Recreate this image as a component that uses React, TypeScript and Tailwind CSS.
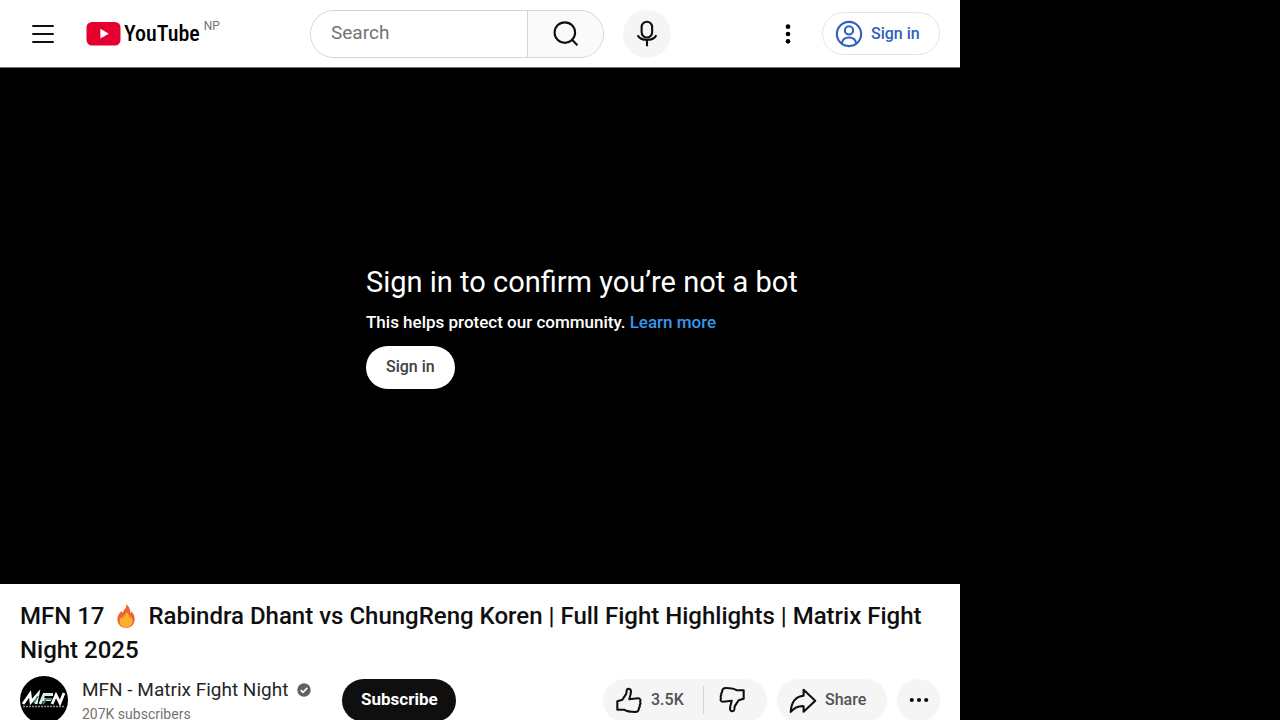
import type { ReactNode } from 'react';

interface IconProps {
  className?: string;
  children: ReactNode;
}

function Icon({ className = 'h-7 w-7', children }: IconProps) {
  return (
    <svg
      className={className}
      viewBox="0 0 24 24"
      fill="none"
      stroke="currentColor"
      strokeWidth="1.8"
      strokeLinejoin="round"
      aria-hidden="true"
    >
      {children}
    </svg>
  );
}

function Logo() {
  return (
    <a href="/" aria-label="YouTube Home" className="flex items-center gap-0.5 text-black">
      <svg className="h-6 w-9" viewBox="0 0 36 24" aria-hidden="true">
        <rect x="0.5" y="0" width="34" height="23.5" rx="5.5" fill="#e6002f" />
        <path d="M14.4 6.8v9.8l8.4-4.9z" fill="#fff" />
      </svg>
      <span className="font-['Roboto_Condensed','Liberation_Sans_Narrow',sans-serif] text-[22px] leading-7 font-medium">
        YouTube
      </span>
    </a>
  );
}

function Header() {
  return (
    <header className="flex h-[68px] items-center border-b border-neutral-500 px-5">
      <div className="flex w-[290px] shrink-0 items-center gap-5">
        <button type="button" aria-label="Guide" className="flex h-12 w-[46px] items-center justify-center">
          <Icon>
            <path d="M2.8 5.2h18.4M2.8 12h18.4M2.8 18.8h18.4" />
          </Icon>
        </button>
        <div className="flex items-start gap-1">
          <Logo />
          <span className="text-xs leading-3 text-neutral-500">NP</span>
        </div>
      </div>

      <form
        className="flex h-12 w-[294px] overflow-hidden rounded-full border border-neutral-300"
        onSubmit={(e) => e.preventDefault()}
      >
        <input
          type="text"
          aria-label="Search"
          placeholder="Search"
          className="min-w-0 flex-1 bg-white pl-5 text-[19px] text-neutral-900 outline-none placeholder:text-neutral-500"
        />
        <button
          type="submit"
          aria-label="Search"
          className="flex w-[76px] items-center justify-center border-l border-neutral-300 bg-neutral-50"
        >
          <Icon>
            <circle cx="11" cy="10.800" r="8.800" />
            <path d="M17.200 17l4.600 4.600" />
          </Icon>
        </button>
      </form>
      <button
        type="button"
        aria-label="Search with your voice"
        className="ml-[19px] flex h-12 w-12 items-center justify-center rounded-full bg-neutral-100"
      >
        <Icon>
          <rect x="7.400" y="1.500" width="9" height="13.500" rx="4.500" />
          <path d="M4 13a8.500 6 0 0 0 16 0M12 17.800v4.600" />
        </Icon>
      </button>

      <div className="ml-auto flex items-center gap-5">
        <button type="button" aria-label="Settings" className="text-black">
          <Icon>
            <g fill="currentColor" stroke="none">
              <circle cx="12" cy="5.700" r="2" />
              <circle cx="12" cy="12" r="2" />
              <circle cx="12" cy="18.300" r="2" />
            </g>
          </Icon>
        </button>
        <a
          href="/signin"
          className="flex h-[43px] w-[118px] items-center gap-2 rounded-full border border-neutral-200 pl-3 text-base font-medium text-[#315fbd]"
        >
          <Icon>
            <circle cx="12" cy="12" r="10.400" />
            <circle cx="12" cy="8.900" r="3.500" />
            <path d="M5.700 20.200c.6-3.400 3.100-5.200 6.300-5.200s5.700 1.800 6.300 5.200" />
          </Icon>
          Sign in
        </a>
      </div>
    </header>
  );
}

function Player() {
  return (
    <section className="flex min-h-[516px] flex-col items-start justify-center bg-black pl-[366px] text-white">
      <h2 className="text-[29px] leading-9">Sign in to confirm you’re not a bot</h2>
      <p className="mt-2.5 text-[17px] leading-6 font-medium">
        This helps protect our community.{' '}
        <a href="/help" className="text-[#3996ed]">
          Learn more
        </a>
      </p>
      <button
        type="button"
        className="mt-3 h-[43px] rounded-full bg-white px-5 text-base font-medium text-neutral-700"
      >
        Sign in
      </button>
    </section>
  );
}

function Flame() {
  return (
    <svg className="mx-1 inline-block h-6 w-6 align-[-4px]" viewBox="0 0 24 24" role="img" aria-label="fire">
      <path
        d="M12.400 0c.2 3-1.200 4.600-2.700 6.500-.6.800-.9 1.500-1.100 2.300-.6-.4-.9-1-1.100-1.700C5.100 9.400 3.400 12 3.400 15.200c0 5 3.600 8.600 8.700 8.600s8.600-3.600 8.600-8.600c0-3.200-1.400-5.900-3.200-8-.1.900-.4 1.600-.9 2.100C16.500 5.800 15 2.300 12.400 0z"
        fill="#ee6530"
      />
      <path
        d="M12.200 8.300c-.2 2-1.400 3-2.500 4.300-.4.500-.7 1-.8 1.500-.4-.3-.7-.7-.9-1.200-1.500 1.200-2.400 2.600-2.400 4.400 0 3.500 2.800 6 6.500 6s6.500-2.500 6.500-6c0-2-.8-3.400-1.900-4.800-.1.700-.4 1.200-.9 1.500-.2-2.300-1.500-4.400-3.600-5.700z"
        fill="#fbb02d"
      />
    </svg>
  );
}

function Avatar() {
  return (
    <svg className="h-12 w-12 shrink-0" viewBox="0 0 48 48" role="img" aria-label="MFN">
      <circle cx="24" cy="24" r="24" fill="#000" />
      <g fill="none" stroke="#fff" strokeWidth="2.800">
        <path d="M3 28l7-10 1 8 7-8-2 10" />
        <path d="M20 28l4-9.500h9M23 23.500h8" stroke="#dfe9e6" />
        <path d="M32 28l4-9 4 8 4-10" />
      </g>
      <path d="M14 27l4-7M23 28l3-5h6" stroke="#3d9580" strokeWidth="1.800" fill="none" />
      <path d="M3 30.500h42" stroke="#929292" strokeWidth="1.400" strokeDasharray="2 1" />
    </svg>
  );
}

function ThumbIcon({ className }: { className: string }) {
  return (
    <Icon className={className}>
      <path d="M2 13.100l4.300-1.300 3.300-5 .5-3.300c.3-1.700 3.500-1.300 3.600.6.100 2.500-.8 5-1.500 7.200l7.500-.8c1.900-.1 2.600 1.700 1.800 3 .6 1 .4 2-.3 2.700.3 1 .1 1.900-.6 2.500-.1 2.400-1 3.600-3.400 3.600-3.600 0-7-.3-9.500-2H2z" />
    </Icon>
  );
}

function Details() {
  return (
    <main className="px-5 pt-[15px]">
      <h1 className="text-2xl leading-[34px] font-medium">
        <span>MFN 17</span> <Flame /> <span>Rabindra Dhant vs ChungReng Koren | Full Fight Highlights | Matrix Fight</span>{' '}
        <span>Night 2025</span>
      </h1>
      <div className="mt-[9px] flex items-center">
        <Avatar />
        <div className="ml-[14px]">
          <a href="/channel" className="flex items-center gap-2 text-[19px] leading-7 text-neutral-800">
            MFN - Matrix Fight Night
            <svg className="h-4 w-4" viewBox="0 0 16 16" aria-label="Verified">
              <circle cx="8" cy="8" r="6.700" fill="#606060" />
              <path d="M4.700 8.200l2.300 2.200 4.300-4.500" fill="none" stroke="#fff" strokeWidth="1.600" />
            </svg>
          </a>
          <p className="text-sm leading-5 text-neutral-500">207K subscribers</p>
        </div>
        <button
          type="button"
          className="ml-[30px] h-[43px] w-[114px] rounded-full bg-[#0f0f0f] text-[17px] font-bold text-white"
        >
          Subscribe
        </button>

        <div className="ml-auto flex h-[43px] gap-2.5 text-base font-medium text-neutral-600">
          <div className="flex items-center rounded-full bg-neutral-100">
            <button type="button" className="flex w-[100px] items-center gap-2 pl-3">
              <ThumbIcon className="h-7 w-7 text-[#0f0f0f]" />
              3.5K
            </button>
            <span className="h-7 w-px bg-neutral-300" />
            <button type="button" aria-label="Dislike" className="flex w-[63px] items-center pl-[14px]">
              <ThumbIcon className="h-7 w-7 rotate-180 text-[#0f0f0f]" />
            </button>
          </div>
          <button type="button" className="flex w-[110px] items-center gap-2 rounded-full bg-neutral-100 pl-3">
            <Icon className="h-7 w-7 text-[#0f0f0f]">
              <path d="M12.500 3.200l10 9.400-10 9.400v-4.700c-4.600-.3-8 1.400-11 4.900.4-8 3.800-13.200 11-13.900z" />
            </Icon>
            Share
          </button>
          <button
            type="button"
            aria-label="More actions"
            className="flex w-[43px] items-center justify-center rounded-full bg-neutral-100 text-[#0f0f0f]"
          >
            <Icon className="h-6 w-6">
              <g fill="currentColor" stroke="none">
                <circle cx="4.800" cy="12" r="2.100" />
                <circle cx="12" cy="12" r="2.100" />
                <circle cx="19.200" cy="12" r="2.100" />
              </g>
            </Icon>
          </button>
        </div>
      </div>
    </main>
  );
}

export default function App() {
  return (
    <div className="min-h-screen bg-black font-['Roboto',sans-serif] text-[#0f0f0f]">
      <div className="min-h-screen w-3/4 bg-white">
        <Header />
        <Player />
        <Details />
      </div>
    </div>
  );
}
